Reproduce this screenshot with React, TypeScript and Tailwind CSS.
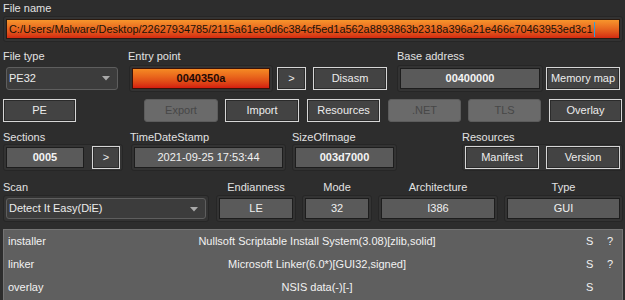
import React from "react";

const frame = "border border-[#262626] bg-[#333333] rounded-[3px] p-[2px] flex items-center";
const val = "h-[21px] bg-[#5a5a5a] border border-[#1d1d1d] flex items-center justify-center text-[#f4f4f4] font-bold";
const valPlain = "h-[21px] bg-[#5a5a5a] border border-[#1d1d1d] flex items-center justify-center text-[#f0f0f0]";
const btn = "h-[23px] border border-[#d6d6d6] bg-[#434343] shadow-[inset_0_0_0_1px_#2b2b2b] flex items-center justify-center text-[#ececec]";
const btnDis = "h-[23px] border border-[#5c5c5c] rounded-[3px] bg-[#6a6a6a] flex items-center justify-center text-[#474747]";

function Arrow() {
  return (
    <svg width="8" height="5" viewBox="0 0 8 5" className="absolute right-[7px] top-[8px]">
      <polygon points="0,0 8,0 4,4.5" fill="#a9a9a9" />
    </svg>
  );
}

function Combo({ w, h, text }: { w: string; h: string; text: string }) {
  return (
    <div className={`relative ${w} ${h} rounded-[3px] border border-[#5e5e5e] bg-[#3c3c3c] flex items-center pl-[2px] text-[#ececec]`}>
      {text}
      <Arrow />
    </div>
  );
}

export default function App() {
  const rows = [
    ["installer", "Nullsoft Scriptable Install System(3.08)[zlib,solid]", "S", "?"],
    ["linker", "Microsoft Linker(6.0*)[GUI32,signed]", "S", "?"],
    ["overlay", "NSIS data(-)[-]", "S", ""],
  ];
  return (
    <div className="w-[625px] h-[300px] overflow-hidden bg-[#2d2d2d] text-[#e2e2e2] text-[11px] leading-[13px] font-['Liberation_Sans',Arial,sans-serif]">
      {/* File name */}
      <div className="h-[16px] pt-[2px] pl-[3px]">File name</div>
      <div className="h-[26px] pl-[3px]">
        <div className={`${frame} w-[620px] h-[26px]`}>
          <div className="relative w-[614px] h-[20px] border border-[#2a1a10] bg-gradient-to-b from-[#f7952c] to-[#d42812] flex items-center pl-[2px] text-[#1a1208] text-[10.9px]">
            C:/Users/Malware/Desktop/22627934785/2115a61ee0d6c384cf5ed1a562a8893863b2318a396a21e466c70463953ed3c1
            <span className="inline-block w-[1px] h-[15px] bg-[#2aa0e0] ml-[1px]" />
          </div>
        </div>
      </div>

      {/* Row C labels */}
      <div className="h-[23px] pt-[8px] flex">
        <div className="ml-[3px] w-[125px]">File type</div>
        <div className="w-[269px]">Entry point</div>
        <div>Base address</div>
      </div>
      {/* Row C */}
      <div className="h-[27px] flex items-center">
        <div className="ml-[6px]">
          <Combo w="w-[112px]" h="h-[23px]" text="PE32" />
        </div>
        <div className={`${frame} ml-[11px] w-[144px] h-[27px]`}>
          <div className="w-[138px] h-[21px] border border-[#3a1208] bg-gradient-to-b from-[#f58a24] to-[#d41a10] flex items-center justify-center font-bold text-[#1e0a04]">
            0040350a
          </div>
        </div>
        <div className={`${btn} ml-[4px] w-[29px]`}>&gt;</div>
        <div className={`${btn} ml-[7px] w-[74px]`}>Disasm</div>
        <div className={`${frame} ml-[10px] w-[146px] h-[27px]`}>
          <div className={`${val} w-[140px]`}>00400000</div>
        </div>
        <div className={`${btn} ml-[3px] w-[74px]`}>Memory map</div>
      </div>

      {/* Row D */}
      <div className="h-[30px] pt-[7px] flex">
        <div className={`${btn} ml-[3px] w-[73px]`}>PE</div>
        <div className={`${btnDis} ml-[68px] w-[74px]`}>Export</div>
        <div className={`${btn} ml-[7px] w-[74px]`}>Import</div>
        <div className={`${btn} ml-[8px] w-[73px]`}>Resources</div>
        <div className={`${btnDis} ml-[8px] w-[73px]`}>.NET</div>
        <div className={`${btnDis} ml-[7px] w-[73px]`}>TLS</div>
        <div className={`${btn} ml-[8px] w-[73px]`}>Overlay</div>
      </div>

      {/* Row E labels */}
      <div className="h-[22px] pt-[9px] flex">
        <div className="ml-[3px] w-[127px]">Sections</div>
        <div className="w-[162px]">TimeDateStamp</div>
        <div className="w-[170px]">SizeOfImage</div>
        <div>Resources</div>
      </div>
      {/* Row E */}
      <div className="h-[27px] flex items-center">
        <div className={`${frame} ml-[3px] w-[120px] h-[27px]`}>
          <div className={`${val} w-[78px]`}>0005</div>
          <div className={`${btn} ml-[8px] w-[28px] h-[21px]`}>&gt;</div>
        </div>
        <div className={`${frame} ml-[8px] w-[155px] h-[27px]`}>
          <div className={`${valPlain} w-[149px]`}>2021-09-25 17:53:44</div>
        </div>
        <div className={`${frame} ml-[6px] w-[105px] h-[27px]`}>
          <div className={`${val} w-[99px]`}>003d7000</div>
        </div>
        <div className={`${frame} ml-[65px] w-[161px] h-[27px]`}>
          <div className={`${btn} w-[74px] h-[21px]`}>Manifest</div>
          <div className={`${btn} ml-[7px] w-[74px] h-[21px]`}>Version</div>
        </div>
      </div>

      {/* Row F labels */}
      <div className="h-[24px] pt-[10px] flex">
        <div className="ml-[3px] w-[213px]">Scan</div>
        <div className="w-[80px] text-center">Endianness</div>
        <div className="ml-[6px] w-[70px] text-center">Mode</div>
        <div className="ml-[6px] w-[120px] text-center">Architecture</div>
        <div className="ml-[6px] w-[119px] text-center">Type</div>
      </div>
      {/* Row F */}
      <div className="h-[27px] flex items-center">
        <div className={`${frame} ml-[3px] w-[206px] h-[27px]`}>
          <Combo w="w-[200px]" h="h-[21px]" text="Detect It Easy(DiE)" />
        </div>
        <div className={`${frame} ml-[7px] w-[80px] h-[27px]`}>
          <div className={`${valPlain} w-[74px]`}>LE</div>
        </div>
        <div className={`${frame} ml-[6px] w-[70px] h-[27px]`}>
          <div className={`${valPlain} w-[64px]`}>32</div>
        </div>
        <div className={`${frame} ml-[6px] w-[120px] h-[27px]`}>
          <div className={`${valPlain} w-[114px]`}>I386</div>
        </div>
        <div className={`${frame} ml-[6px] w-[119px] h-[27px]`}>
          <div className={`${valPlain} w-[113px]`}>GUI</div>
        </div>
      </div>

      {/* Table */}
      <div className="mt-[7px] ml-[3px] w-[620px] h-[80px] bg-[#5f5f5f] border-l border-t border-r border-[#747474] text-[#f2f2f2]">
        {rows.map((r) => (
          <div key={r[0]} className="h-[23px] flex items-center">
            <div className="w-[120px] pl-[4px]">{r[0]}</div>
            <div className="w-[386px] text-center">{r[1]}</div>
            <div className="w-[76px]" />
            <div className="w-[21px]">{r[2]}</div>
            <div>{r[3]}</div>
          </div>
        ))}
      </div>
    </div>
  );
}
